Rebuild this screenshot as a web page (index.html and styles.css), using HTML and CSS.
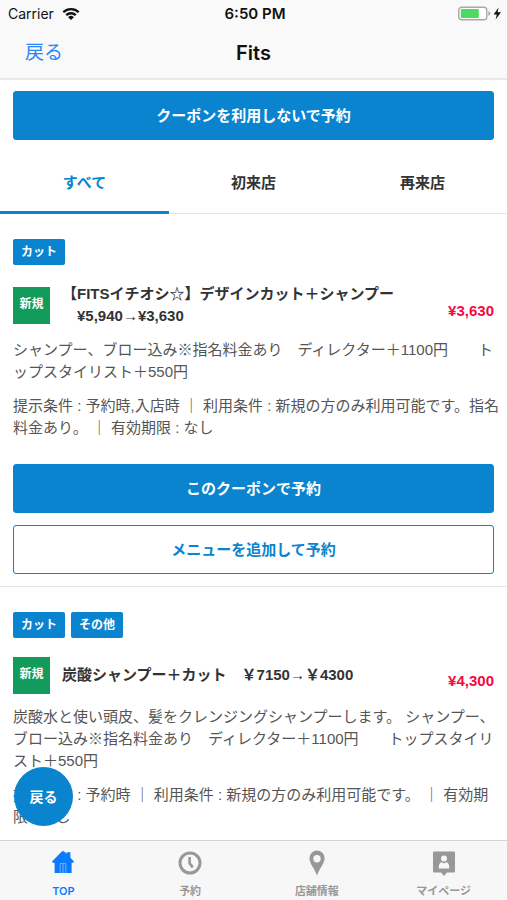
FILE: index.html
```html
<!DOCTYPE html>
<html lang="ja">
<head>
<meta charset="utf-8">
<meta name="viewport" content="width=device-width, initial-scale=1">
<title>Fits</title>
<link rel="stylesheet" href="styles.css">
</head>
<body>
<div class="app">
  <header class="top">
    <div class="status">
      <div class="carrier">
        <span>Carrier</span>
        <svg width="18" height="14" viewBox="0 0 18 14" aria-hidden="true">
          <g fill="none" stroke="#111" stroke-width="2.3">
            <path d="M1.3 5.2a11 11 0 0 1 15.4 0"/>
            <path d="M4.2 8.2a6.9 6.9 0 0 1 9.6 0"/>
          </g>
          <path d="M6.1 10.2a4.2 4.2 0 0 1 5.8 0L9 13z" fill="#111"/>
        </svg>
      </div>
      <div class="clock">6:50 PM</div>
      <div class="power">
        <svg width="44" height="16" viewBox="0 0 44 16" aria-hidden="true">
          <rect x="0.8" y="1.2" width="28" height="12.6" rx="3" fill="#fff" stroke="#a9a9a9" stroke-width="1.4"/>
          <rect x="2.8" y="3.1" width="18" height="8.8" rx="1" fill="#4cd964"/>
          <path d="M30.3 5.3q2 .5 2 2.2t-2 2.2z" fill="#a9a9a9"/>
          <path d="M40.6 1.5L35.6 8.4h3.2L37.6 13.5l5.4-7.3h-3.5z" fill="#111"/>
        </svg>
      </div>
    </div>
    <div class="nav">
      <a class="back" href="#">戻る</a>
      <h1>Fits</h1>
      <span></span>
    </div>
  </header>

  <main>
    <div class="lead"><button class="btn" type="button">クーポンを利用しないで予約</button></div>
    <nav class="tabs">
      <a class="tab active" href="#">すべて</a>
      <a class="tab" href="#">初来店</a>
      <a class="tab" href="#">再来店</a>
    </nav>

    <article class="card">
      <div class="tags"><span class="tag">カット</span></div>
      <div class="head">
        <span class="badge">新規</span>
        <h2>【FITSイチオシ☆】デザインカット＋シャンプー<br>　¥5,940→¥3,630</h2>
        <span class="price">¥3,630</span>
      </div>
      <p>シャンプー、ブロー込み※指名料金あり　ディレクター＋1100円　　ト<br>ップスタイリスト＋550円</p>
      <p>提示条件 : 予約時,入店時 ｜ 利用条件 : 新規の方のみ利用可能です。指名<br>料金あり。 ｜ 有効期限 : なし</p>
      <div class="actions">
        <button class="btn" type="button">このクーポンで予約</button>
        <button class="btn outline" type="button">メニューを追加して予約</button>
      </div>
    </article>

    <article class="card">
      <div class="tags"><span class="tag">カット</span><span class="tag">その他</span></div>
      <div class="head">
        <span class="badge">新規</span>
        <h2>炭酸シャンプー＋カット　￥7150→￥4300</h2>
        <span class="price">¥4,300</span>
      </div>
      <p>炭酸水と使い頭皮、髪をクレンジングシャンプーします。 シャンプー、<br>ブロー込み※指名料金あり　ディレクター＋1100円　　トップスタイリ<br>スト＋550円</p>
      <p>提示条件 : 予約時 ｜ 利用条件 : 新規の方のみ利用可能です。 ｜ 有効期<br>限 : なし</p>
    </article>
    <button class="fab" type="button">戻る</button>
  </main>

  <nav class="bar">
    <a class="item on" href="#">
      <svg width="24" height="24" viewBox="0 0 24 24" aria-hidden="true">
        <path fill="currentColor" d="M1 10.6L10.8.4Q12-.6 13.2.4L15.6 2.8V1.2h3.8v5.6l3.6 3.8-.8 1.2H20.6V22H3.600V11.800H1.800z"/>
        <path d="M9.200 22v-9.400h5.600V22M12 13v9" fill="none" stroke="#8cc0fb" stroke-width=".8"/>
      </svg>
      <span>TOP</span>
    </a>
    <a class="item" href="#">
      <svg width="24" height="24" viewBox="0 0 24 24" aria-hidden="true">
        <circle cx="12" cy="12" r="10" fill="none" stroke="currentColor" stroke-width="3"/>
        <path d="M11.600 6v6.200l3.200 4.200" fill="none" stroke="currentColor" stroke-width="2.600"/>
      </svg>
      <span>予約</span>
    </a>
    <a class="item" href="#">
      <svg width="24" height="24" viewBox="0 0 24 24" aria-hidden="true">
        <path fill="currentColor" fill-rule="evenodd" d="M12-.6A7.600 7.600 0 0 0 4.400 7C4.400 12.600 9.600 17.500 12 24.400 14.400 17.500 19.600 12.600 19.600 7A7.600 7.600 0 0 0 12-.6zM12 4a3.700 3.700 0 1 1 0 7.400A3.700 3.700 0 0 1 12 4z"/>
      </svg>
      <span>店舗情報</span>
    </a>
    <a class="item" href="#">
      <svg width="24" height="24" viewBox="0 0 24 24" aria-hidden="true">
        <path fill="currentColor" d="M2 .4h20q1 0 1 1V20.600q0 1-1 1H15L12 25 9 21.600H2q-1 0-1-1V1.400q0-1 1-1z"/>
        <circle cx="12" cy="7.400" r="3" fill="#f7f7f7"/>
        <path fill="#f7f7f7" d="M6.800 17.600V15.400Q7 11.400 10 11.200L12 12.400l2-1.200q3 .2 3.200 4.200v2.200z"/>
      </svg>
      <span>マイページ</span>
    </a>
  </nav>
</div>
</body>
</html>
```
FILE: styles.css
```css
* {
  box-sizing: border-box;
}

body {
  margin: 0;
  background: #fff;
  color: #555;
  font-family: "Liberation Sans", "Noto Sans CJK JP", sans-serif;
  font-size: 15px;
  line-height: 22px;
}

a {
  color: inherit;
  text-decoration: none;
}

h1,
h2,
p {
  margin: 0;
}

button {
  font: inherit;
  padding: 0;
  cursor: pointer;
}

.app {
  display: flex;
  flex-direction: column;
  height: 100vh;
}

.top {
  background: #f9f9f9;
  border-bottom: 2px solid #e9e9e9;
  color: #111;
  font-family: Inter, "Noto Sans CJK JP", sans-serif;
}

.status,
.nav {
  display: grid;
  grid-template-columns: 1fr auto 1fr;
  align-items: center;
}

.status {
  height: 28px;
  padding: 0 5px 0 8px;
  font-size: 14px;
}

.carrier {
  display: flex;
  align-items: center;
  gap: 8px;
}

.clock {
  font-size: 15px;
  font-weight: 600;
}

.power {
  display: flex;
  justify-content: flex-end;
}

.nav {
  height: 50px;
  padding: 0 25px;
}

.back {
  color: #2a86f5;
  font-size: 19px;
}

h1 {
  font-size: 20px;
  font-weight: 600;
}

main {
  position: relative;
  flex: 1;
  min-height: 0;
  overflow: hidden;
}

.lead {
  padding: 11px 13px 12px;
}

.btn {
  display: block;
  width: 100%;
  height: 49px;
  border: 1px solid #0b84cf;
  border-radius: 3px;
  background: #0b84cf;
  color: #fff;
  font-weight: 700;
}

.outline {
  background: #fff;
  color: #0b84cf;
}

.tabs {
  display: flex;
  border-bottom: 1px solid #e4e4e4;
}

.tab {
  flex: 1;
  height: 62px;
  margin-bottom: -1px;
  padding-top: 20px;
  color: #333;
  font-weight: 700;
  text-align: center;
}

.active {
  border-bottom: 3px solid #0b84cf;
  color: #0b84cf;
}

.card {
  padding: 25px 13px 12px;
}

.card + .card {
  border-top: 1px solid #e4e4e4;
}

.tags {
  display: flex;
  gap: 6px;
}

.tag {
  padding: 2px 8px;
  border-radius: 2px;
  background: #0b84cf;
  color: #fff;
  font-size: 12px;
  font-weight: 700;
}

.head {
  display: flex;
  align-items: center;
  gap: 12px;
  min-height: 38px;
  margin-top: 18px;
}

.badge {
  flex: none;
  width: 37px;
  height: 37px;
  background: #129b5b;
  color: #fff;
  font-size: 12px;
  font-weight: 700;
  line-height: 35px;
  text-align: center;
}

h2 {
  flex: 1;
  color: #333;
  font-size: 15px;
  font-weight: 700;
}

.price {
  padding-top: 12px;
  color: #f5093f;
  font-weight: 700;
}

.card p {
  margin-top: 12px;
  white-space: nowrap;
}

.actions {
  display: grid;
  gap: 12px;
  margin-top: 25px;
}

.fab {
  position: absolute;
  left: 14px;
  bottom: 14px;
  width: 59px;
  height: 59px;
  border: 0;
  border-radius: 50%;
  background: #0b84cf;
  color: #fff;
  font-size: 14px;
  font-weight: 700;
}

.bar {
  display: flex;
  height: 60px;
  border-top: 1px solid #d4d4d4;
  background: #f7f7f7;
}

.item {
  display: flex;
  flex: 1;
  flex-direction: column;
  align-items: center;
  gap: 8px;
  padding-top: 10px;
  color: #989898;
  font-size: 11px;
  font-weight: 600;
  line-height: 16px;
  font-family: Inter, "Noto Sans CJK JP", sans-serif;
}

.item svg {
  overflow: visible;
}

.on {
  color: #0a7bff;
}
```
